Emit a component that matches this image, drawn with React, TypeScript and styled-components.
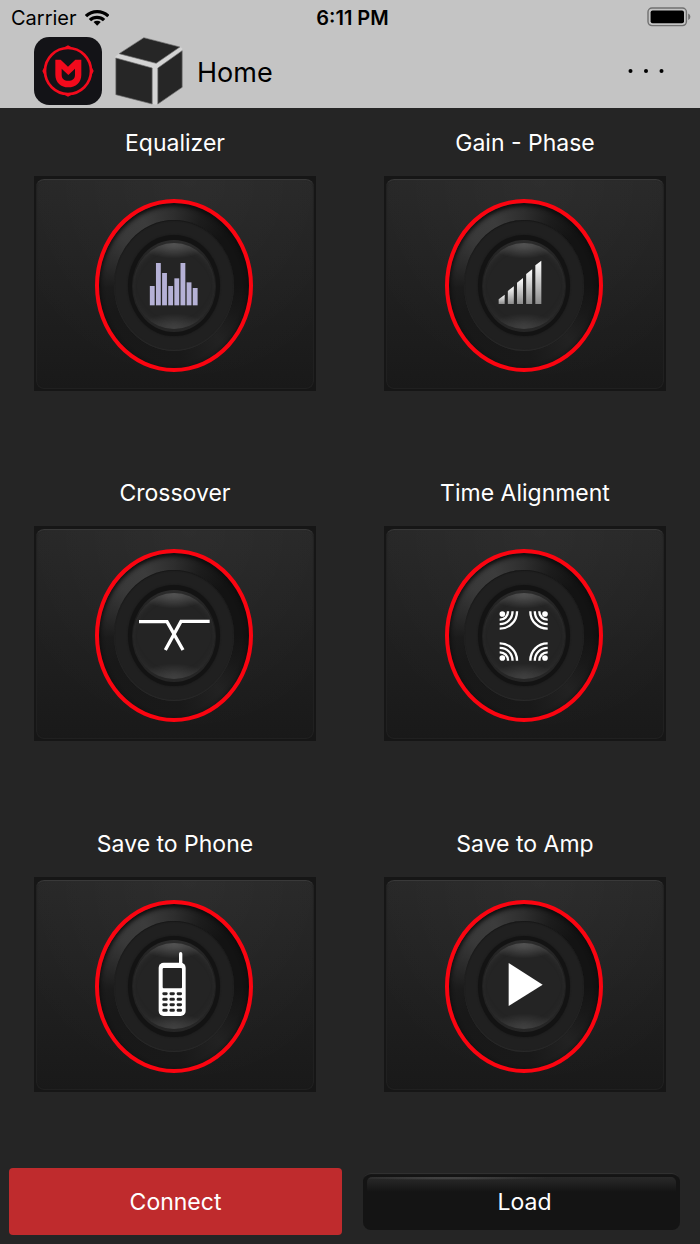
import React from "react";
import styled, { createGlobalStyle } from "styled-components";

const GlobalStyle = createGlobalStyle`
  * { box-sizing: border-box; }
  body { margin: 0; background: #252525; }
  button { border: 0; padding: 0; background: none; color: inherit; font: inherit; cursor: pointer; }
  svg { display: block; }
`;

const Screen = styled.div`
  display: flex;
  flex-direction: column;
  min-height: 100vh;
  background: #252525;
  color: #fff;
  font-family: Inter, "Liberation Sans", sans-serif;
`;

const Header = styled.header`
  height: 108px;
  background: #c4c4c4;
  color: #000;
`;

const StatusBar = styled.div`
  display: grid;
  grid-template-columns: 1fr auto 1fr;
  align-items: center;
  height: 36px;
  padding: 0 9px 0 11px;
  font-size: 20px;
  line-height: 36px;
`;

const Carrier = styled.span`
  display: flex;
  align-items: center;
  gap: 8px;
`;

const Clock = styled.time`
  padding-left: 3px;
  font-weight: 600;
`;

const StatusIcon = styled.svg`
  margin-bottom: 2px;
`;

const BatterySlot = styled.span`
  justify-self: end;
`;

const Toolbar = styled.div`
  display: flex;
  align-items: center;
  height: 70px;
  padding: 0 34px;
`;

const CubeSlot = styled.span`
  margin: 0 14px 0 13px;
`;

const Title = styled.h1`
  margin: 0;
  flex: 1;
  padding-top: 3px;
  font-size: 27px;
  line-height: 36px;
  font-weight: 400;
`;

const MoreButton = styled.button`
  padding: 16px 0;
`;

const Menu = styled.main`
  display: grid;
  grid-template-columns: 1fr 1fr;
  grid-auto-rows: 1fr;
  flex: 1;
`;

const Cell = styled.section`
  display: flex;
  flex-direction: column;
  min-height: 350px;
  padding: 20px 34px 0;
`;

const Label = styled.h2`
  margin: 0 0 18px;
  font-size: 23px;
  line-height: 30px;
  font-weight: 400;
  text-align: center;
`;

const Tile = styled.button`
  display: flex;
  height: 215px;
  padding: 3px 2px 2px;
  background: #161616;
`;

const Panel = styled.span`
  display: flex;
  flex: 1;
  align-self: stretch;
  justify-content: center;
  align-items: flex-start;
  padding: 20px 2px 0 0;
  border-radius: 8px;
  background:
    radial-gradient(ellipse 70% 100% at 55% 0%, rgba(255, 255, 255, 0.03), transparent),
    linear-gradient(#272727, #191919);
  box-shadow: inset 0 2px 1px -1px #3c3c3c, inset 0 0 1px 1px #222;
`;

const Disc = styled.span`
  display: flex;
  flex: none;
  align-items: center;
  justify-content: center;
  border-radius: 50%;
`;

const Groove = styled(Disc)`
  width: 158px;
  height: 173px;
  border: 4px solid #fb0410;
  background: conic-gradient(
    #2e2e2e 0deg, #1c1c1c 22deg, #131313 45deg, #131313 90deg, #191919 115deg,
    #222 140deg, #1f1f1f 152deg, #191919 175deg, #181818 245deg, #1b1b1b 268deg,
    #282828 285deg, #393939 312deg, #3c3c3c 335deg, #2e2e2e 360deg
  );
  box-shadow: inset 0 2px 4px 1px #0c0c0c;
`;

const Ring = styled(Disc)`
  width: 120px;
  height: 131px;
  background: #202020;
  box-shadow: inset 0 -1px 1px #2a2a2a, inset 0 1px 1px #181818;
`;

const Moat = styled(Disc)`
  width: 92px;
  height: 101px;
  background: #131313;
  box-shadow: 0 0 2px #161616;
`;

const Knob = styled(Disc)`
  width: 84px;
  height: 92px;
  background: linear-gradient(#2c2c2c, #1e1e1e 30%, #262626);
`;

const Face = styled(Disc)`
  width: 82px;
  height: 86px;
  background:
    radial-gradient(ellipse 42% 18% at 50% 0%, rgba(255, 255, 255, 0.26), transparent),
    radial-gradient(ellipse 42% 18% at 50% 100%, rgba(255, 255, 255, 0.16), transparent),
    #242424;
  box-shadow: inset 0 5px 7px -5px #484848, inset 0 -5px 7px -5px #3a3a3a;
`;

const Glyph = styled.svg`
  flex: none;
  width: 84px;
  height: 92px;
`;

const Footer = styled.footer`
  display: grid;
  grid-template-columns: 1fr 1fr;
  align-items: center;
  height: 85px;
  font-size: 23px;
  line-height: 30px;
`;

const ConnectButton = styled.button`
  height: 67px;
  margin: 0 8px 0 9px;
  border-radius: 4px;
  background: #bf2b2d;
`;

const LoadButton = styled.button`
  display: flex;
  height: 57px;
  margin: 0 20px 0 13px;
  padding: 4px;
  border-radius: 8px;
  background: #141414;
  box-shadow: inset 0 2px 1px -1px #333;
`;

const LoadFace = styled.span`
  flex: 1;
  align-self: stretch;
  padding: 10px 0 0 6px;
  border-radius: 5px;
  background:
    radial-gradient(ellipse 100px 2px at 27% 1px, #4a4a4a, transparent),
    linear-gradient(#292929, #202020 7px, #141414 15px);
`;

const WifiIcon = () => (
  <StatusIcon width="24" height="17" viewBox="253 26 73 50" fill="none" stroke="#000" aria-hidden="true">
    <path d="M256 47 A49 49 0 0 1 324 47" strokeWidth="10" />
    <path d="M268 59 A31 31 0 0 1 311 59" strokeWidth="10" />
    <path d="M290 76 L279 65 A16 16 0 0 1 301 65 Z" fill="#000" stroke="none" />
  </StatusIcon>
);

const BatteryIcon = () => (
  <StatusIcon width="44" height="20" viewBox="0 0 44 20" aria-hidden="true">
    <rect x="1" y="1" width="38.4" height="17.6" rx="4" fill="none" stroke="#707070" strokeWidth="1.4" />
    <rect x="3.6" y="3.4" width="33.4" height="12.8" rx="2" fill="#000" />
    <path d="M41.2 6.6 Q43.4 7.6 43.4 9.8 Q43.4 12 41.2 13 Z" fill="#707070" />
  </StatusIcon>
);

const BrandLogo = () => (
  <svg width="68" height="68" viewBox="6 9 204 204" role="img" aria-label="Brand logo">
    <rect x="6" y="9" width="204" height="204" rx="46" fill="#131317" />
    <circle cx="108" cy="111" r="69" fill="none" stroke="#f30a1c" strokeWidth="8" />
    <path
      d="M94 41 L108 34 L122 41Z M94 181 L108 188 L122 181Z M38 97 L31 111 L38 125Z M178 97 L185 111 L178 125Z"
      fill="#f30a1c"
    />
    <path
      fillRule="evenodd"
      fill="#f30a1c"
      d="M70 77 H86 L108 98 L130 77 H148 V122 C148 146 131 160 109 160 C87 160 70 146 70 122Z
         M89 104 V122 C89 134 97 140 109 140 C121 140 129 134 129 122 V104 L109 123Z"
    />
  </svg>
);

const CubeIcon = () => (
  <svg width="68" height="68" viewBox="344 110 203 204" aria-hidden="true">
    <path d="M430 111 L545 143 V262 L466 313 L345 284 V168Z" fill="#d4d4d4" />
    <g fill="#262626" stroke="#6e6e6e" strokeWidth="2">
      <path d="M430 112 L538 140 L467 189 L356 160Z" />
      <path d="M346 173 L455 203 V311 L346 283Z" />
      <path d="M545 151 V261 L472 311 V203Z" />
    </g>
  </svg>
);

const EqualizerGlyph = () => (
  <g fill="#b5b1d6">
    {[138, 69, 99, 138, 115, 69, 127, 144].map((top, i) => (
      <rect key={i} x={53.5 + i * 18.4} y={top} width="14.5" height={196 - top} />
    ))}
  </g>
);

const GainGlyph = () => (
  <g>
    <defs>
      <linearGradient id="steel" x1="0" y1="0" x2="0" y2="1">
        <stop offset="0" stopColor="#fff" />
        <stop offset="1" stopColor="#8c8c8c" />
      </linearGradient>
    </defs>
    {[178, 153, 128, 102, 76].map((top, i) => (
      <path
        key={i}
        fill="url(#steel)"
        d={`M${50 + i * 27.5} ${top} l18 -14 V192 h-18Z`}
      />
    ))}
  </g>
);

const CrossoverGlyph = () => (
  <g fill="none" stroke="#fff" strokeWidth="10">
    <path d="M21 95 H105 L153 180" />
    <path d="M233 94 H147 L100 180" />
  </g>
);

const corners = [
  [54, 65, 1, 1],
  [196, 65, -1, 1],
  [54, 211, 1, -1],
  [196, 211, -1, -1],
];

const TimeGlyph = () => (
  <g>
    {corners.map(([x, y, sx, sy], i) => (
      <g key={i} transform={`translate(${x} ${y}) scale(${sx} ${sy})`}>
        <circle cx="7" cy="7" r="8.5" fill="#fff" />
        {[24, 37.5, 51].map((r) => (
          <path key={r} d={`M${r} -1 V0 A${r} ${r} 0 0 1 0 ${r} H-1`} fill="none" stroke="#fff" strokeWidth="7" />
        ))}
      </g>
    ))}
  </g>
);

const PhoneGlyph = () => (
  <g>
    <rect x="141" y="36" width="10" height="46" rx="5" fill="#fff" />
    <rect x="80" y="68" width="81" height="160" rx="15" fill="#fff" />
    <rect x="92" y="84" width="58" height="61" rx="3" fill="#242424" />
    {[161, 178, 194, 211].map((y) =>
      [99, 120.5, 142].map((x) => (
        <rect key={`${x}-${y}`} x={x - 8} y={y - 4.5} width="16" height="9" rx="4" fill="#242424" />
      ))
    )}
  </g>
);

const PlayGlyph = () => <path d="M80 69 L182 134 L80 198Z" fill="#fff" />;

const items = [
  { label: "Equalizer", Icon: EqualizerGlyph },
  { label: "Gain - Phase", Icon: GainGlyph },
  { label: "Crossover", Icon: CrossoverGlyph },
  { label: "Time Alignment", Icon: TimeGlyph },
  { label: "Save to Phone", Icon: PhoneGlyph },
  { label: "Save to Amp", Icon: PlayGlyph },
];

const DialTile = ({ label, Icon }: { label: string; Icon: React.FC }) => (
  <Cell>
    <Label>{label}</Label>
    <Tile type="button" aria-label={label}>
      <Panel>
        <Groove>
          <Ring>
            <Moat>
              <Knob>
                <Face>
                  <Glyph viewBox="0 0 252 276" aria-hidden="true">
                    <Icon />
                  </Glyph>
                </Face>
              </Knob>
            </Moat>
          </Ring>
        </Groove>
      </Panel>
    </Tile>
  </Cell>
);

export default function App() {
  return (
    <Screen>
      <GlobalStyle />
      <Header>
        <StatusBar>
          <Carrier>
            Carrier
            <WifiIcon />
          </Carrier>
          <Clock>6:11 PM</Clock>
          <BatterySlot>
            <BatteryIcon />
          </BatterySlot>
        </StatusBar>
        <Toolbar>
          <BrandLogo />
          <CubeSlot>
            <CubeIcon />
          </CubeSlot>
          <Title>Home</Title>
          <MoreButton type="button" aria-label="More options">
            <svg width="38" height="6" viewBox="0 0 38 6" aria-hidden="true">
              <circle cx="2.5" cy="3" r="2" />
              <circle cx="18" cy="3" r="2" />
              <circle cx="33.5" cy="3" r="2" />
            </svg>
          </MoreButton>
        </Toolbar>
      </Header>
      <Menu>
        {items.map((item) => (
          <DialTile key={item.label} {...item} />
        ))}
      </Menu>
      <Footer>
        <ConnectButton type="button">Connect</ConnectButton>
        <LoadButton type="button">
          <LoadFace>Load</LoadFace>
        </LoadButton>
      </Footer>
    </Screen>
  );
}
